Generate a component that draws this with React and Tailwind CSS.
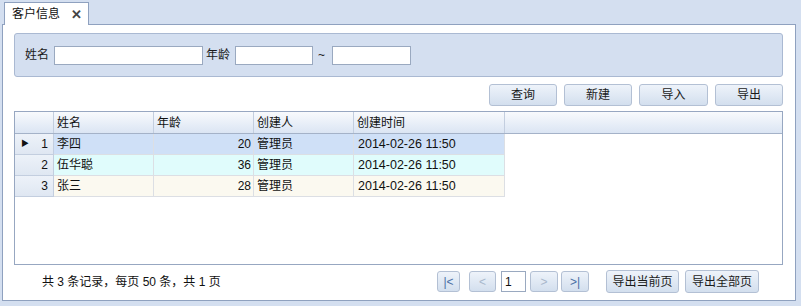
import React from "react";

const font = { fontFamily: '"Liberation Sans", "Noto Sans CJK SC", sans-serif' };

function Btn({ children, className = "" }) {
  return (
    <div
      className={
        "flex items-center justify-center rounded-[3px] border border-[#b3c0d4] bg-gradient-to-b from-[#eef3fa] to-[#d3dfee] text-[12px] text-[#1b1b1b] " +
        className
      }
    >
      {children}
    </div>
  );
}

const rows = [
  { n: 1, name: "李四", age: 20, bg: "bg-[#cfe0f7]", sel: true },
  { n: 2, name: "伍华聪", age: 36, bg: "bg-[#e0fcfc]" },
  { n: 3, name: "张三", age: 28, bg: "bg-[#fbf9f0]" },
];

export default function App() {
  return (
    <div className="w-[801px] h-[306px] bg-[#d4dff0] overflow-hidden" style={font}>
      {/* tab strip */}
      <div className="h-[25px] pt-[2px] pl-[4px] flex">
        <div className="relative z-10 w-[85px] h-[23px] bg-white border border-b-0 border-[#8fa1bf] flex items-center pl-[7px] text-[12px] text-[#111]">
          <span>客户信息</span>
          <span className="ml-[11px] text-[#444] text-[13px] font-bold leading-none">✕</span>
        </div>
      </div>
      {/* main panel */}
      <div className="ml-[2px] w-[794px] h-[277px] -mt-px bg-white border border-[#8fa1bf] flex flex-col pl-[11px]">
        {/* search panel */}
        <div className="mt-[8px] w-[769px] h-[44px] rounded-[3px] border border-[#aab9d2] bg-[#d4dff0] flex items-center pl-[10px] text-[12px] text-[#1b1b1b]">
          <span>姓名</span>
          <div className="ml-[5px] w-[149px] h-[19px] bg-white border border-[#9aa9c0]" />
          <span className="ml-[3px]">年龄</span>
          <div className="ml-[5px] w-[78px] h-[19px] bg-white border border-[#9aa9c0]" />
          <span className="ml-[5px] w-[14px]">~</span>
          <div className="w-[79px] h-[19px] bg-white border border-[#9aa9c0]" />
        </div>
        {/* buttons */}
        <div className="mt-[7px] w-[769px] flex justify-end gap-[7px]">
          <Btn className="w-[68px] h-[22px]">查询</Btn>
          <Btn className="w-[68px] h-[22px]">新建</Btn>
          <Btn className="w-[69px] h-[22px]">导入</Btn>
          <Btn className="w-[68px] h-[22px]">导出</Btn>
        </div>
        {/* grid */}
        <div className="mt-[5px] w-[769px] h-[154px] border border-[#97a7c1] bg-white text-[12px] text-[#111]">
          <div className="flex h-[22px] bg-gradient-to-b from-[#f8fafd] to-[#dbe5f3] border-b border-[#a4b2c8]">
            <div className="w-[39px] border-r border-[#c3cedf]" />
            <div className="w-[100px] border-r border-[#c3cedf] pl-[3px] flex items-center">姓名</div>
            <div className="w-[100px] border-r border-[#c3cedf] pl-[3px] flex items-center">年龄</div>
            <div className="w-[100px] border-r border-[#c3cedf] pl-[3px] flex items-center">创建人</div>
            <div className="w-[151px] border-r border-[#c3cedf] pl-[3px] flex items-center">创建时间</div>
            <div className="flex-1" />
          </div>
          {rows.map((r) => (
            <div key={r.n} className="flex h-[21px]">
              <div className="w-[39px] bg-gradient-to-b from-[#edf2f9] to-[#dfe7f2] border-r border-b border-[#c3cedf] flex items-center justify-between pl-[6px] pr-[5px]">
                <span className="text-[8px] leading-none">{r.sel ? "▶" : ""}</span>
                <span>{r.n}</span>
              </div>
              <div className={"w-[100px] border-r border-b border-[#dcdfe4] pl-[3px] flex items-center " + r.bg}>{r.name}</div>
              <div className={"w-[100px] border-r border-b border-[#dcdfe4] pr-[2px] flex items-center justify-end " + r.bg}>{r.age}</div>
              <div className={"w-[100px] border-r border-b border-[#dcdfe4] pl-[3px] flex items-center " + r.bg}>管理员</div>
              <div className={"w-[151px] border-r border-b border-[#dcdfe4] pl-[4px] flex items-center text-[12.5px] " + r.bg}>2014-02-26 11:50</div>
            </div>
          ))}
        </div>
        {/* footer */}
        <div className="w-[769px] flex items-center h-[33px] text-[12px] text-[#111]">
          <span className="ml-[28px]">共 3 条记录，每页 50 条，共 1 页</span>
          <div className="ml-auto flex items-center mr-[24px]">
            <Btn className="w-[23px] h-[21px] text-[#4a6fa5]">|&lt;</Btn>
            <Btn className="ml-[9px] w-[27px] h-[21px] text-[#a9b8cc]">&lt;</Btn>
            <div className="ml-[5px] w-[25px] h-[21px] bg-white border border-[#9aa9c0] flex items-center pl-[3px]">1</div>
            <Btn className="ml-[4px] w-[28px] h-[21px] text-[#a9b8cc]">&gt;</Btn>
            <Btn className="ml-[3px] w-[28px] h-[21px] text-[#4a6fa5]">&gt;|</Btn>
            <Btn className="ml-[17px] w-[73px] h-[23px]">导出当前页</Btn>
            <Btn className="ml-[6px] w-[74px] h-[23px]">导出全部页</Btn>
          </div>
        </div>
      </div>
    </div>
  );
}
